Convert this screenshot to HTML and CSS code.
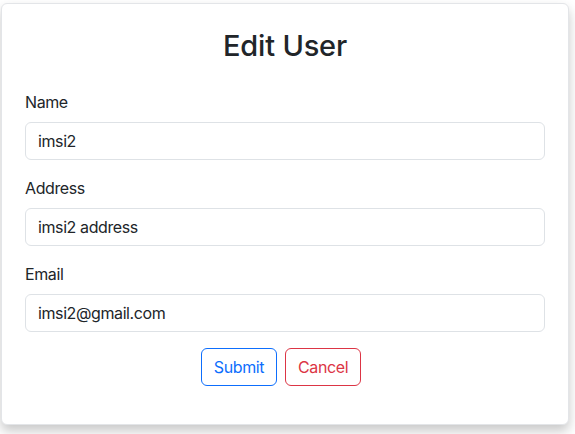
FILE: index.html
```html
<!DOCTYPE html>
<html lang="en">
<head>
<meta charset="utf-8">
<title>Edit User</title>
<link rel="stylesheet" href="styles.css">
</head>
<body>
<div class="page">
  <div class="card">
    <h2 class="title">Edit User</h2>
    <form class="form">
      <div class="field">
        <label class="label" for="name">Name</label>
        <input class="input" id="name" type="text" value="imsi2">
      </div>
      <div class="field">
        <label class="label" for="address">Address</label>
        <input class="input" id="address" type="text" value="imsi2 address">
      </div>
      <div class="field">
        <label class="label" for="email">Email</label>
        <input class="input" id="email" type="email" value="imsi2@gmail.com">
      </div>
      <div class="actions">
        <button type="button" class="btn btn-primary">Submit</button>
        <button type="button" class="btn btn-danger">Cancel</button>
      </div>
    </form>
  </div>
</div>
</body>
</html>
```

FILE: styles.css
```css
* { box-sizing: border-box; }
html, body { margin: 0; padding: 0; background: #fff; }
body {
  font-family: Inter, "Noto Sans", "Liberation Sans", sans-serif;
  color: #212529;
  font-size: 16px;
  line-height: 1.5;
  letter-spacing: -0.4px;
}
.page {
  min-height: 434px;
  padding: 3px 6px 9px 1px;
}
.card {
  width: 568px;
  height: 422px;
  background: #fff;
  border: 1px solid #e3e5e8;
  border-radius: 6px;
  box-shadow: 0 6px 12px rgba(0,0,0,0.22);
  padding: 23px 23px;
}
.title {
  margin: 0 0 25px;
  text-align: center;
  font-size: 29px;
  font-weight: 500;
  line-height: 38px;
  letter-spacing: -0.2px;
}
.field { margin-bottom: 16px; }
.label {
  display: block;
  margin-bottom: 8px;
  line-height: 24px;
}
.input {
  display: block;
  width: 100%;
  height: 38px;
  padding: 6px 12px;
  font: inherit;
  letter-spacing: inherit;
  color: #212529;
  border: 1px solid #dee2e6;
  border-radius: 6px;
  background: #fff;
}
.actions {
  display: flex;
  justify-content: center;
}
.btn {
  font: inherit;
  letter-spacing: inherit;
  height: 38px;
  padding: 6px 12px;
  background: transparent;
  border: 1px solid;
  border-radius: 6px;
  margin-right: 8px;
  line-height: 24px;
}
.btn-primary { color: #0d6efd; border-color: #0d6efd; }
.btn-danger { color: #dc3545; border-color: #dc3545; }
```
